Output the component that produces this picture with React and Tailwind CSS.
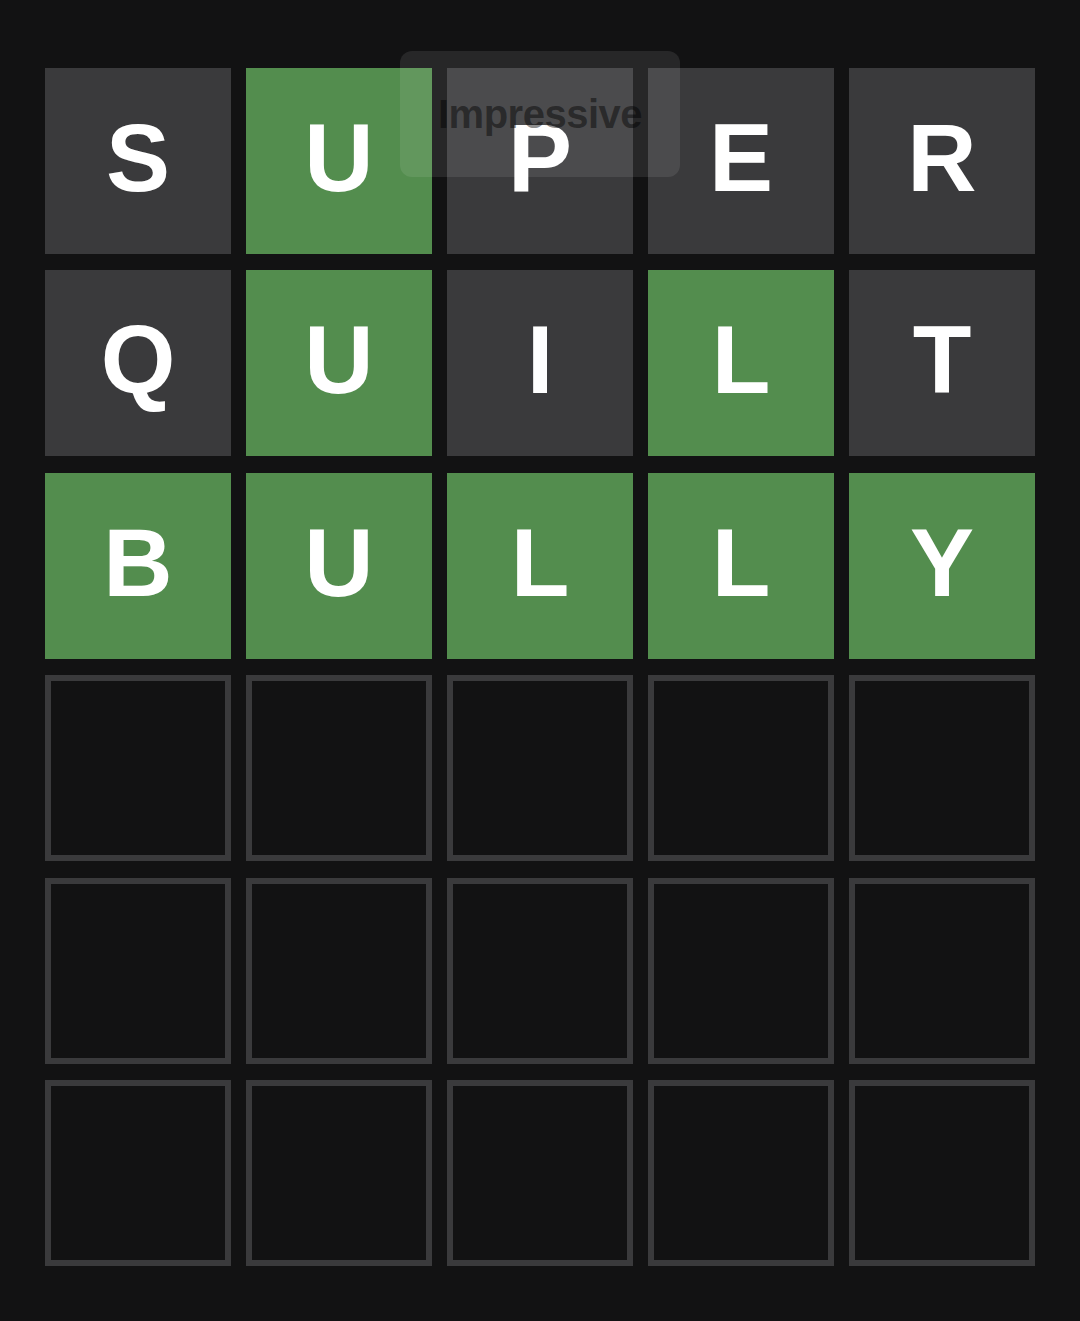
import React from 'react';

const rows = [
    [['S', 'absent'], ['U', 'correct'], ['P', 'absent'], ['E', 'absent'], ['R', 'absent']],
    [['Q', 'absent'], ['U', 'correct'], ['I', 'absent'], ['L', 'correct'], ['T', 'absent']],
    [['B', 'correct'], ['U', 'correct'], ['L', 'correct'], ['L', 'correct'], ['Y', 'correct']],
    [], [], [],
];

function Tile({ letter, state }) {
    if (!letter) {
        return <div className="w-[186px] h-[186px] border-[6px] border-[#3a3a3c]" />;
    }
    const bg = state === 'correct' ? 'bg-[#538d4e]' : 'bg-[#3a3a3c]';
    return (
        <div className={`w-[186px] h-[186px] ${bg} flex items-center justify-center text-white font-bold text-[96px] leading-none pb-[6px]`}>
            {letter}
        </div>
    );
}

export default function App() {
    return (
        <div className="relative min-h-screen bg-[#121213] font-['Liberation_Sans',Arial,sans-serif]">
            <div className="flex justify-center pt-[68px]">
                <div className="grid grid-cols-5 gap-x-[15px] gap-y-[16.4px]">
                    {rows.map((row, r) =>
                        Array.from({ length: 5 }).map((_, c) => (
                            <Tile key={`${r}-${c}`} letter={row[c]?.[0]} state={row[c]?.[1]} />
                        ))
                    )}
                </div>
            </div>

            {/* toast */}
            <div className="absolute top-[51px] left-1/2 -translate-x-1/2 w-[280px] h-[126px] rounded-[12px] bg-white/[0.09] flex items-center justify-center">
                <span className="text-[40px] font-bold text-black/45 tracking-[-0.5px]">Impressive</span>
            </div>
        </div>
    );
}
